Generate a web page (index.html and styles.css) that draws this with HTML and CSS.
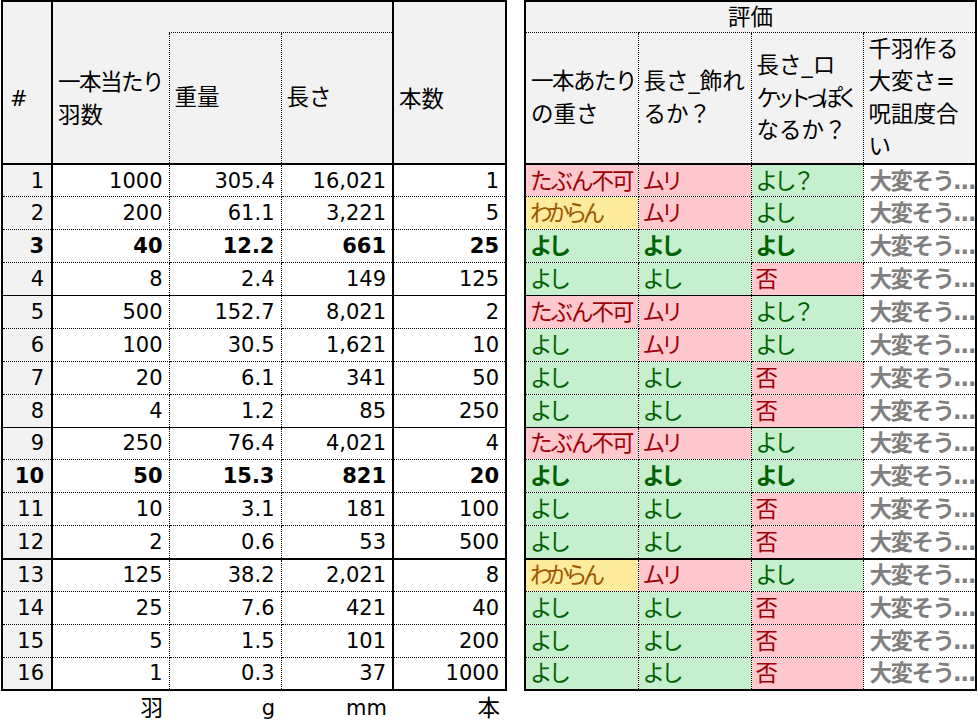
FILE: index.html
```html
<!DOCTYPE html>
<html lang="ja">
<head>
<meta charset="utf-8">
<title>千羽鶴</title>
<link rel="stylesheet" href="styles.css">
</head>
<body>
<div class="sheet">
  <table class="grid left">
    <colgroup>
      <col class="w-idx"><col class="w-a"><col class="w-b"><col class="w-b"><col class="w-c">
    </colgroup>
    <thead>
      <tr class="h1">
        <th class="idx low" rowspan="2">#</th>
        <th class="hd ja nr low" rowspan="2"><span class="k1">一本当たり</span><br>羽数</th>
        <th class="hd top nl" colspan="2"></th>
        <th class="hd ja thickl edge-r low" rowspan="2">本数</th>
      </tr>
      <tr class="h2">
        <th class="hd ja">重量</th>
        <th class="hd ja">長さ</th>
      </tr>
    </thead>
    <tbody>
      <tr><td class="idx">1</td><td>1000</td><td>305.4</td><td>16,021</td><td class="thickl edge-r">1</td></tr>
      <tr><td class="idx">2</td><td>200</td><td>61.1</td><td>3,221</td><td class="thickl edge-r">5</td></tr>
      <tr class="b"><td class="idx">3</td><td>40</td><td>12.2</td><td>661</td><td class="thickl edge-r">25</td></tr>
      <tr class="solid"><td class="idx">4</td><td>8</td><td>2.4</td><td>149</td><td class="thickl edge-r">125</td></tr>
      <tr><td class="idx">5</td><td>500</td><td>152.7</td><td>8,021</td><td class="thickl edge-r">2</td></tr>
      <tr><td class="idx">6</td><td>100</td><td>30.5</td><td>1,621</td><td class="thickl edge-r">10</td></tr>
      <tr><td class="idx">7</td><td>20</td><td>6.1</td><td>341</td><td class="thickl edge-r">50</td></tr>
      <tr class="solid"><td class="idx">8</td><td>4</td><td>1.2</td><td>85</td><td class="thickl edge-r">250</td></tr>
      <tr><td class="idx">9</td><td>250</td><td>76.4</td><td>4,021</td><td class="thickl edge-r">4</td></tr>
      <tr class="b"><td class="idx">10</td><td>50</td><td>15.3</td><td>821</td><td class="thickl edge-r">20</td></tr>
      <tr><td class="idx">11</td><td>10</td><td>3.1</td><td>181</td><td class="thickl edge-r">100</td></tr>
      <tr class="thick"><td class="idx">12</td><td>2</td><td>0.6</td><td>53</td><td class="thickl edge-r">500</td></tr>
      <tr><td class="idx">13</td><td>125</td><td>38.2</td><td>2,021</td><td class="thickl edge-r">8</td></tr>
      <tr><td class="idx">14</td><td>25</td><td>7.6</td><td>421</td><td class="thickl edge-r">40</td></tr>
      <tr><td class="idx">15</td><td>5</td><td>1.5</td><td>101</td><td class="thickl edge-r">200</td></tr>
      <tr class="last"><td class="idx">16</td><td>1</td><td>0.3</td><td>37</td><td class="thickl edge-r">1000</td></tr>
    </tbody>
    <tfoot>
      <tr class="units"><td></td><td class="ja">羽</td><td>g</td><td>mm</td><td class="ja">本</td></tr>
    </tfoot>
  </table>

  <table class="grid right">
    <colgroup>
      <col class="w-c"><col class="w-c"><col class="w-b"><col class="w-c">
    </colgroup>
    <thead>
      <tr class="h1">
        <th class="hd ja top center edge-l edge-r" colspan="4">評価</th>
      </tr>
      <tr class="h2">
        <th class="hd ja edge-l"><span class="k1">一本あたり</span><br>の重さ</th>
        <th class="hd ja">長さ_飾れ<br>るか？</th>
        <th class="hd ja">長さ_ロ<br><span class="k2">ケットっぽく</span><br>なるか？</th>
        <th class="hd ja edge-r">千羽作る<br>大変さ=<br>呪詛度合<br>い</th>
      </tr>
    </thead>
    <tbody>
      <tr><td class="ng wide">たぶん不可</td><td class="ng">ムリ</td><td class="ok">よし？</td><td class="hard">大変そう…</td></tr>
      <tr><td class="mid">わからん</td><td class="ng">ムリ</td><td class="ok">よし</td><td class="hard">大変そう…</td></tr>
      <tr class="b"><td class="ok">よし</td><td class="ok">よし</td><td class="ok">よし</td><td class="hard">大変そう…</td></tr>
      <tr class="solid"><td class="ok">よし</td><td class="ok">よし</td><td class="ng">否</td><td class="hard">大変そう…</td></tr>
      <tr><td class="ng wide">たぶん不可</td><td class="ng">ムリ</td><td class="ok">よし？</td><td class="hard">大変そう…</td></tr>
      <tr><td class="ok">よし</td><td class="ng">ムリ</td><td class="ok">よし</td><td class="hard">大変そう…</td></tr>
      <tr><td class="ok">よし</td><td class="ok">よし</td><td class="ng">否</td><td class="hard">大変そう…</td></tr>
      <tr class="solid"><td class="ok">よし</td><td class="ok">よし</td><td class="ng">否</td><td class="hard">大変そう…</td></tr>
      <tr><td class="ng wide">たぶん不可</td><td class="ng">ムリ</td><td class="ok">よし</td><td class="hard">大変そう…</td></tr>
      <tr class="b"><td class="ok">よし</td><td class="ok">よし</td><td class="ok">よし</td><td class="hard">大変そう…</td></tr>
      <tr><td class="ok">よし</td><td class="ok">よし</td><td class="ng">否</td><td class="hard">大変そう…</td></tr>
      <tr class="thick"><td class="ok">よし</td><td class="ok">よし</td><td class="ng">否</td><td class="hard">大変そう…</td></tr>
      <tr><td class="mid">わからん</td><td class="ng">ムリ</td><td class="ok">よし</td><td class="hard">大変そう…</td></tr>
      <tr><td class="ok">よし</td><td class="ok">よし</td><td class="ng">否</td><td class="hard">大変そう…</td></tr>
      <tr><td class="ok">よし</td><td class="ok">よし</td><td class="ng">否</td><td class="hard">大変そう…</td></tr>
      <tr class="last"><td class="ok">よし</td><td class="ok">よし</td><td class="ng">否</td><td class="hard">大変そう…</td></tr>
    </tbody>
  </table>
</div>
</body>
</html>
```

FILE: styles.css
```css
html, body {
  margin: 0;
  padding: 0;
  background: #ffffff;
}

body {
  font-family: "DejaVu Sans", "Noto Sans CJK JP", sans-serif;
  font-size: 21px;
  color: #000000;
}

.sheet {
  display: flex;
  align-items: flex-start;
  gap: 17px;
  padding: 0 0 0 1px;
}

.grid {
  border-collapse: collapse;
  table-layout: fixed;
  border: none;
}

.left { width: 505px; }
.right { width: 451px; }

.w-idx { width: 50px; }
.w-a { width: 117px; }
.w-b { width: 112px; }
.w-c { width: 113px; }

.grid th,
.grid td {
  padding: 0;
  line-height: 20px;
  white-space: nowrap;
  overflow: hidden;
  border: 1px dotted #000;
}

.grid .ja,
.right td {
  font-size: 22.5px;
}

.grid th {
  font-weight: normal;
  background: #f2f2f2;
  text-align: left;
  vertical-align: middle;
}

.grid .h1 th { border-top: 2px solid #000; }

.h1 { height: 31px; }
.h2 { height: 132px; }

.grid .hd { padding-left: 5px; line-height: 33px; }
.grid .hd.top { border-bottom: 1px dotted #000; }
.grid .hd.center { text-align: center; padding-left: 0; line-height: 24px; }
.grid .h2 .hd { border-top: 1px dotted #000; }
.right .h2 .hd { line-height: 32.5px; }
.grid .low { padding-top: 33px; }

.k1 { letter-spacing: -1.5px; }
.k2 { letter-spacing: -6.5px; }

.left .h1 .nr { border-right: none; }
.left .h1 .nl { border-left: none; }

.grid th.idx {
  padding-left: 7px;
  border-left: 2px solid #000;
  border-right: 2px solid #000;
}

.grid thead tr:last-child th,
.grid thead .idx,
.grid thead th[rowspan] {
  border-bottom: 2px solid #000;
}

.grid tbody tr { height: 32.875px; }

.grid td {
  text-align: right;
  padding-right: 6px;
  vertical-align: middle;
}

.grid td.idx {
  background: #f2f2f2;
  border-right: 2px solid #000;
  border-left: 2px solid #000;
  padding-right: 7px;
}

.grid .thickl { border-left: 2px solid #000; }
.grid .edge-r { border-right: 2px solid #000; }
.grid .edge-l { border-left: 2px solid #000; }

.right tbody td:first-child { border-left: 2px solid #000; }
.right tbody td:last-child { border-right: 2px solid #000; }

.grid tr.solid td { border-bottom: 1px solid #000; }
.grid tr.thick td { border-bottom: 2px solid #000; }
.grid tr.last td { border-bottom: 2px solid #000; }

.grid tr.b td { font-weight: bold; }

.right td {
  text-align: left;
  padding: 0 0 0 4px;
  letter-spacing: -4px;
}

.right td.ng { background: #ffc7ce; color: #9c0006; }
.right td.ok { background: #c6efce; color: #006100; }
.right td.mid { background: #ffeb9c; color: #9c5700; letter-spacing: -5px; }
.right td.wide { letter-spacing: -2px; }
.right td.hard {
  background: #ffffff;
  color: #7f7f7f;
  font-weight: bold;
  padding-left: 6px;
  letter-spacing: -1.5px;
}

.grid tfoot td {
  border: none;
  background: transparent;
  height: 33px;
  padding-right: 6px;
}
```
